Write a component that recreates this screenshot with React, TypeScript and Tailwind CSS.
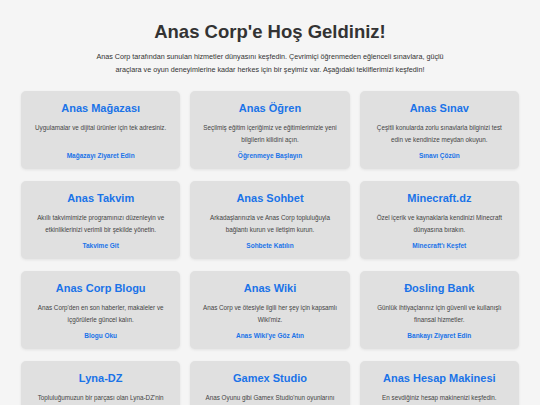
import React from "react";

type Offer = {
  title: string;
  text: string;
  link: string;
};

const offers: Offer[] = [
  {
    title: "Anas Mağazası",
    text: "Uygulamalar ve dijital ürünler için tek adresiniz.",
    link: "Mağazayı Ziyaret Edin",
  },
  {
    title: "Anas Öğren",
    text: "Seçilmiş eğitim içeriğimiz ve eğitimlerimizle yeni bilgilerin kilidini açın.",
    link: "Öğrenmeye Başlayın",
  },
  {
    title: "Anas Sınav",
    text: "Çeşitli konularda zorlu sınavlarla bilginizi test edin ve kendinize meydan okuyun.",
    link: "Sınavı Çözün",
  },
  {
    title: "Anas Takvim",
    text: "Akıllı takvimimizle programınızı düzenleyin ve etkinliklerinizi verimli bir şekilde yönetin.",
    link: "Takvime Git",
  },
  {
    title: "Anas Sohbet",
    text: "Arkadaşlarınızla ve Anas Corp topluluğuyla bağlantı kurun ve iletişim kurun.",
    link: "Sohbete Katılın",
  },
  {
    title: "Minecraft.dz",
    text: "Özel içerik ve kaynaklarla kendinizi Minecraft dünyasına bırakın.",
    link: "Minecraft'ı Keşfet",
  },
  {
    title: "Anas Corp Blogu",
    text: "Anas Corp'den en son haberler, makaleler ve içgörülerle güncel kalın.",
    link: "Blogu Oku",
  },
  {
    title: "Anas Wiki",
    text: "Anas Corp ve ötesiyle ilgili her şey için kapsamlı Wiki'miz.",
    link: "Anas Wiki'ye Göz Atın",
  },
  {
    title: "Đosling Bank",
    text: "Günlük ihtiyaçlarınız için güvenli ve kullanışlı finansal hizmetler.",
    link: "Bankayı Ziyaret Edin",
  },
  {
    title: "Lyna-DZ",
    text: "Topluluğumuzun bir parçası olan Lyna-DZ'nin dünyasını keşfedin.",
    link: "Lyna-DZ'yi Ziyaret Edin",
  },
  {
    title: "Gamex Studio",
    text: "Anas Oyunu gibi Gamex Studio'nun oyunlarını deneyimleyin.",
    link: "Oyunları Keşfet",
  },
  {
    title: "Anas Hesap Makinesi",
    text: "En sevdiğiniz hesap makinenizi keşfedin.",
    link: "Hesap Makinesine Git",
  },
];

function OfferCard({ offer }: { offer: Offer }) {
  return (
    <div className="flex flex-col items-center h-[78px] rounded-[5px] bg-[#e0e0e0] shadow-[0_1px_3px_rgba(0,0,0,0.08)] px-[12px] pt-[9px] pb-[8px] text-center">
      <h2 className="text-[11px] leading-[16px] font-bold text-[#1a73e8]">{offer.title}</h2>
      <p className="mt-[6px] text-[6.3px] leading-[12px] text-[#444]">{offer.text}</p>
      <a href="#" className="mt-auto text-[6.5px] leading-[10px] font-bold text-[#1a73e8]">
        {offer.link}
      </a>
    </div>
  );
}

export default function App() {
  return (
    <div className="min-h-screen bg-[#f5f5f5] text-[#333] font-['Liberation_Sans',Arial,sans-serif]">
      <header className="pt-[20px] text-center">
        <h1 className="text-[18.5px] leading-[24px] font-bold text-[#333]">Anas Corp'e Hoş Geldiniz!</h1>
        <p className="mx-auto mt-[6px] max-w-[354px] text-[7.2px] leading-[13px] text-[#333]">
          Anas Corp tarafından sunulan hizmetler dünyasını keşfedin. Çevrimiçi öğrenmeden eğlenceli sınavlara, güçlü
          araçlara ve oyun deneyimlerine kadar herkes için bir şeyimiz var. Aşağıdaki tekliflerimizi keşfedin!
        </p>
      </header>
      <main className="grid grid-cols-3 gap-x-[10px] gap-y-[12px] px-[21px] pt-[15px] pb-6">
        {offers.map((o) => (
          <OfferCard key={o.title} offer={o} />
        ))}
      </main>
    </div>
  );
}
